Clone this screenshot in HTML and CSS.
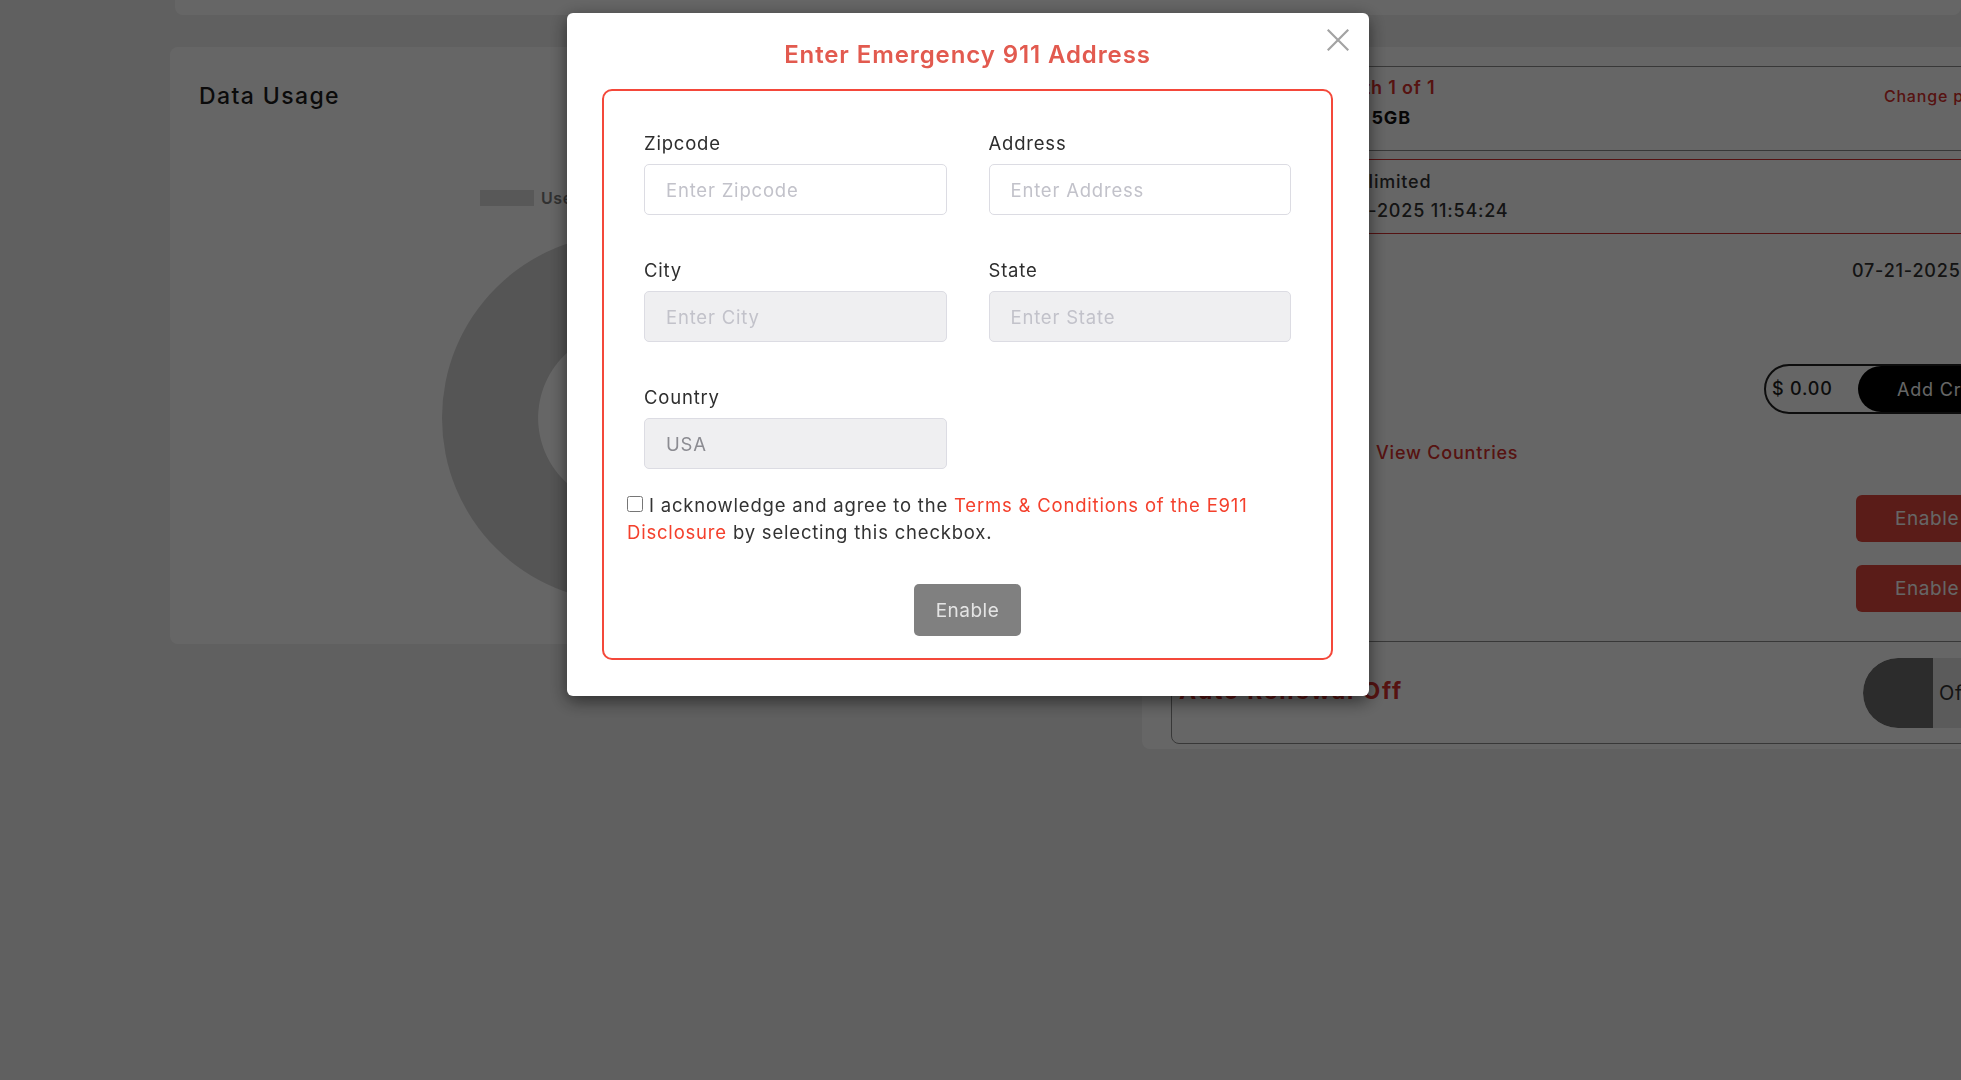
FILE: index.html
```html
<!DOCTYPE html>
<html lang="en">
<head>
<meta charset="utf-8">
<title>Enter Emergency 911 Address</title>
<link rel="stylesheet" href="styles.css">
</head>
<body>
<div class="page">
  <div class="top-card"></div>
  <div class="content">
    <section class="card usage-card">
      <h2 class="card-title">Data Usage</h2>
      <div class="chart">
        <div class="legend">
          <span class="legend-item"><span class="swatch swatch-gray"></span>Used</span>
          <span class="legend-item"><span class="swatch swatch-red"></span>Remaining</span>
        </div>
        <div class="donut"></div>
      </div>
    </section>
    <section class="card plan-card">
      <div class="plan-box">
        <div class="plan-lines">
          <div class="line red semi">Billing Period: Month 1 of 1</div>
          <div class="line bold">Monthly Data Plan: 5GB</div>
        </div>
        <a class="change-link">Change plan</a>
      </div>
      <div class="exp-box">
        <div class="line medium">Data Allowance: Unlimited</div>
        <div class="line medium">Plan Expires: 07-22-2025 11:54:24</div>
      </div>
      <div class="row">
        <span class="key">Activation Date</span>
        <span class="val">07-21-2025 11:54:24</span>
      </div>
      <div class="row row-balance">
        <span class="key">Balance</span>
        <div class="credit-pill">
          <span class="credit-amount">$ 0.00</span>
          <button class="credit-btn">Add Credit</button>
        </div>
      </div>
      <div class="row row-countries">
        <span class="key key-wide">Roaming</span>
        <a class="red-link">View Countries</a>
      </div>
      <div class="row row-btn row-end">
        <button class="red-btn">Enable</button>
      </div>
      <div class="row row-btn second">
        <span class="key">E911 Address</span>
        <button class="red-btn">Enable</button>
      </div>
      <div class="renew-box">
        <span class="renew-text">Auto Renewal Off</span>
        <span class="toggle"><span class="knob"></span><span class="toggle-label">Off</span></span>
      </div>
    </section>
  </div>
</div>

<div class="backdrop"></div>

<div class="modal" role="dialog" aria-labelledby="e911-title">
  <button class="close-btn" aria-label="Close">
    <svg viewBox="0 0 22 22" width="22" height="22"><path d="M1.5 1.5 L20.5 20.5 M20.5 1.5 L1.5 20.5" stroke="#a3a3a3" stroke-width="2.2" fill="none" stroke-linecap="square"/></svg>
  </button>
  <h3 class="modal-title" id="e911-title">Enter Emergency 911 Address</h3>
  <div class="e911-box">
    <div class="form-grid">
      <div class="field">
        <label class="field-label">Zipcode</label>
        <input class="field-input" type="text" placeholder="Enter Zipcode">
      </div>
      <div class="field">
        <label class="field-label">Address</label>
        <input class="field-input" type="text" placeholder="Enter Address">
      </div>
      <div class="field">
        <label class="field-label">City</label>
        <input class="field-input" type="text" placeholder="Enter City" disabled>
      </div>
      <div class="field">
        <label class="field-label">State</label>
        <input class="field-input" type="text" placeholder="Enter State" disabled>
      </div>
      <div class="field">
        <label class="field-label">Country</label>
        <input class="field-input" type="text" value="USA" disabled>
      </div>
    </div>
    <div class="agree">
      <input class="agree-check" type="checkbox"> <span>I acknowledge and agree to the</span> <a class="terms-link">Terms &amp; Conditions of the E911</a> <a class="terms-link">Disclosure</a> <span>by selecting this checkbox.</span>
    </div>
    <div class="actions">
      <button class="enable-btn" disabled>Enable</button>
    </div>
  </div>
</div>
</body>
</html>
```

FILE: styles.css
```css
* { box-sizing: border-box; }

html, body {
  margin: 0;
  padding: 0;
}

body {
  width: 1961px;
  height: 1080px;
  overflow: hidden;
  background: #f0f0f0;
  font-family: Inter, "Noto Sans", "DejaVu Sans", sans-serif;
  color: #222;
}

/* ---------- background page ---------- */
.top-card {
  margin-left: 175px;
  height: 15px;
  background: #fff;
  border-radius: 0 0 8px 8px;
}

.content {
  display: flex;
  align-items: flex-start;
  gap: 20px;
  margin-top: 32px;
  padding-left: 170px;
}

.card {
  background: #fff;
  border-radius: 8px;
  flex-shrink: 0;
}

.usage-card {
  width: 952px;
  height: 597px;
  padding: 35px 29px 0;
}

.card-title {
  margin: 0;
  font-size: 23px;
  line-height: 28px;
  font-weight: 500;
  color: #1c1c1c;
  letter-spacing: 1.4px;
}

.chart {
  width: 854px;
}

.legend {
  display: flex;
  gap: 20px;
  margin-top: 80px;
  padding-left: 281px;
  height: 16px;
  font-size: 16px;
  line-height: 16px;
  color: #7c7c7c;
  font-weight: 600;
  letter-spacing: 0.6px;
}

.legend-item {
  display: flex;
  align-items: center;
  gap: 7px;
}

.swatch {
  display: inline-block;
  width: 54px;
  height: 16px;
}

.swatch-gray { background: #dcdcdc; }
.swatch-red { background: #e53935; }

.donut {
  width: 368px;
  height: 368px;
  margin: 28px auto 0;
  border-radius: 50%;
  background: radial-gradient(circle closest-side, #fff 47.5%, #d4d4d4 48%);
}

.plan-card {
  width: 886px;
  padding: 19px 28px 5px 29px;
  letter-spacing: 0.8px;
}

.line {
  font-size: 18px;
  line-height: 30px;
  white-space: nowrap;
}

.red { color: #d8302c; }
.semi { font-weight: 600; }
.bold { font-weight: 700; color: #111; }
.medium { font-weight: 500; color: #333; }

.plan-box {
  height: 85px;
  border: 1px solid #8c8c8c;
  border-radius: 8px;
  padding: 6px 10px 0 14px;
  display: flex;
  justify-content: space-between;
}

.change-link {
  font-size: 16px;
  color: #d8302c;
  font-weight: 500;
  margin-top: 13px;
  white-space: nowrap;
}

.exp-box {
  margin-top: 8px;
  height: 75px;
  border: 1px solid #d32f2f;
  border-radius: 8px;
  padding: 7px 14px 0;
}

.exp-box .line { line-height: 29px; }

.row {
  display: flex;
  align-items: center;
  justify-content: space-between;
  font-size: 18px;
  line-height: 30px;
  color: #333;
  font-weight: 500;
  white-space: nowrap;
}

.row-end {
  justify-content: flex-end;
}

.row .key { padding-left: 14px; }

.exp-box + .row {
  margin-top: 22px;
}

.val {
  color: #333;
  margin-right: -44px;
}

.row-balance {
  margin-top: 78px;
}

.credit-pill {
  display: flex;
  align-items: stretch;
  height: 50px;
  width: 236px;
  border: 2px solid #222;
  border-radius: 25px;
  overflow: hidden;
}

.credit-amount {
  width: 92px;
  padding-left: 6px;
  display: flex;
  align-items: center;
  font-size: 18px;
  color: #222;
}

.credit-btn {
  flex: 1;
  border: 0;
  border-radius: 25px;
  background: #000;
  color: #fff;
  font-family: inherit;
  font-size: 18px;
  letter-spacing: 0.8px;
  padding: 0 0 0 39px;
  text-align: left;
  white-space: nowrap;
}

.row-countries {
  margin-top: 24px;
  justify-content: flex-start;
}

.key-wide {
  width: 205px;
}

.red-link {
  color: #d8302c;
  font-weight: 500;
}

.row-btn {
  margin-top: 27px;
}

.row-btn.second {
  margin-top: 23px;
}

.red-btn {
  height: 47px;
  width: 144px;
  border: 0;
  border-radius: 6px;
  background: #e0483c;
  color: #fff;
  font-family: inherit;
  font-size: 19px;
  letter-spacing: 0.6px;
  text-align: left;
  padding-left: 39px;
}

.renew-box {
  margin-top: 29px;
  height: 103px;
  border: 1px solid #8c8c8c;
  border-radius: 8px;
  display: flex;
  align-items: center;
  justify-content: space-between;
  padding: 0 0 0 7px;
}

.renew-text {
  font-size: 23px;
  font-weight: 700;
  color: #d8302c;
  letter-spacing: 1.8px;
  margin-top: -4px;
}

.toggle {
  display: flex;
  align-items: center;
  width: 136px;
  height: 70px;
  border-radius: 35px;
  background: #e3e3e3;
  overflow: hidden;
}

.knob {
  width: 70px;
  height: 70px;
  border-radius: 35px 0 0 35px;
  background: #6e6e6e;
}

.toggle-label {
  padding-left: 6px;
  font-size: 20px;
  color: #333;
}

/* ---------- modal ---------- */
.backdrop {
  position: fixed;
  inset: 0;
  background: rgba(0, 0, 0, 0.6);
}

.modal {
  position: fixed;
  left: 567px;
  top: 13px;
  width: 802px;
  background: #fff;
  border-radius: 6px;
  padding: 27px 36px 36px 35px;
  box-shadow: 0 5px 18px rgba(0, 0, 0, 0.55);
}

.close-btn {
  position: absolute;
  top: 16px;
  right: 20px;
  width: 22px;
  height: 22px;
  padding: 0;
  border: 0;
  background: none;
}

.close-btn svg { display: block; }

.modal-title {
  margin: 0 0 19px;
  text-align: center;
  font-size: 24px;
  line-height: 30px;
  font-weight: 600;
  letter-spacing: 0.9px;
  color: #e25a4f;
}

.e911-box {
  border: 2px solid #f4483a;
  border-radius: 10px;
  padding: 40px 23px 22px;
}

.form-grid {
  display: grid;
  grid-template-columns: repeat(2, minmax(0, 1fr));
  column-gap: 42px;
  row-gap: 43px;
  padding: 0 17px;
}

.field {
  display: flex;
  flex-direction: column;
  min-width: 0;
}

.field-label {
  font-size: 18.5px;
  line-height: 24px;
  letter-spacing: 0.8px;
  margin-bottom: 9px;
  color: #2e2e2e;
}

.field-input {
  width: 100%;
  min-width: 0;
  height: 51px;
  border: 1px solid #dcdce3;
  border-radius: 5px;
  padding: 0 21px;
  font-family: inherit;
  font-size: 18.5px;
  letter-spacing: 0.8px;
  color: #333;
  background: #fff;
  outline: none;
}

.field-input::placeholder {
  color: #c2c2ca;
}

.field-input:disabled {
  background: #efeff1;
  color: #8c8c92;
  -webkit-text-fill-color: #8c8c92;
  opacity: 1;
}

.field-input:disabled::placeholder {
  color: #c2c2ca;
  -webkit-text-fill-color: #c2c2ca;
}

.agree {
  margin-top: 23px;
  max-width: 650px;
  font-size: 18.5px;
  line-height: 27px;
  letter-spacing: 0.8px;
  color: #333;
}

.agree-check {
  width: 16px;
  height: 16px;
  margin: 0;
  vertical-align: 0;
}

.terms-link {
  color: #f4402c;
}

.actions {
  display: flex;
  justify-content: center;
  margin-top: 38px;
}

.enable-btn {
  height: 52px;
  width: 107px;
  padding: 0;
  border: 0;
  border-radius: 5px;
  background: #808080;
  color: #e4e4e4;
  font-family: inherit;
  font-size: 19px;
  letter-spacing: 0.5px;
}
```
